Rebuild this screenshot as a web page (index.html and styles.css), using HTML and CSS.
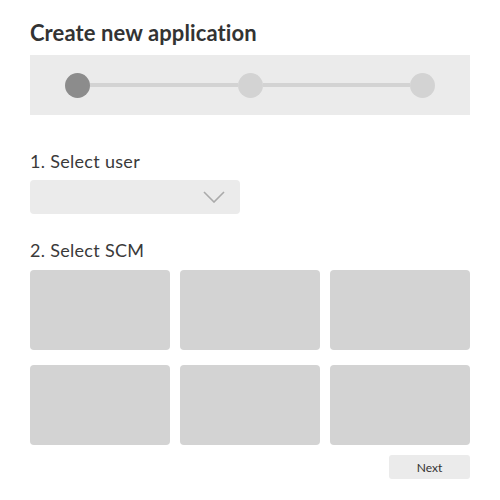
FILE: index.html
```html
<!DOCTYPE html>
<html>
<head>
<meta charset="utf-8">
<link rel="stylesheet" href="styles.css">
</head>
<body>
<div class="page">
  <h1 class="title">Create new application</h1>
  <div class="stepper">
    <div class="track">
      <span class="dot active"></span>
      <span class="line"></span>
      <span class="dot"></span>
      <span class="line"></span>
      <span class="dot"></span>
    </div>
  </div>
  <h2 class="label first">1. Select user</h2>
  <div class="select">
    <svg class="chev" width="22" height="12" viewBox="0 0 22 12"><path d="M1 1 L11 11 L21 1" fill="none" stroke="#aaaaaa" stroke-width="1.6"/></svg>
  </div>
  <h2 class="label second">2. Select SCM</h2>
  <div class="grid">
    <div class="card"></div>
    <div class="card"></div>
    <div class="card"></div>
    <div class="card"></div>
    <div class="card"></div>
    <div class="card"></div>
  </div>
  <div class="actions">
    <button class="next">Next</button>
  </div>
</div>
</body>
</html>
```
FILE: styles.css
```css
html, body {
  margin: 0;
  padding: 0;
  background: #ffffff;
}
body {
  font-family: Lato, "Liberation Sans", sans-serif;
  color: #333333;
}
.page {
  width: 440px;
  padding: 0 30px;
}
.title {
  margin: 0;
  padding-top: 21px;
  font-size: 22px;
  font-weight: 700;
  line-height: 24px;
  letter-spacing: 0.1px;
  color: #333333;
}
.stepper {
  margin-top: 10px;
  height: 60px;
  background: #ebebeb;
  display: flex;
  align-items: center;
  padding: 0 35px;
}
.track {
  flex: 1;
  display: flex;
  align-items: center;
}
.dot {
  width: 25px;
  height: 25px;
  border-radius: 50%;
  background: #d3d3d3;
  flex: none;
}
.dot.active {
  background: #8c8c8c;
}
.line {
  flex: 1;
  height: 4px;
  background: #d3d3d3;
}
.label {
  margin: 0;
  font-size: 18px;
  font-weight: 400;
  line-height: 20px;
  letter-spacing: 0.3px;
  color: #3a3a3a;
}
.label.first {
  margin-top: 36px;
}
.select {
  margin-top: 9px;
  width: 210px;
  height: 34px;
  background: #ebebeb;
  border-radius: 4px;
  display: flex;
  align-items: center;
  justify-content: flex-end;
  padding-right: 15px;
  box-sizing: border-box;
}
.label.second {
  margin-top: 26px;
}
.grid {
  margin-top: 10px;
  display: grid;
  grid-template-columns: repeat(3, 1fr);
  column-gap: 10px;
  row-gap: 15px;
}
.card {
  height: 80px;
  background: #d3d3d3;
  border-radius: 4px;
}
.actions {
  display: flex;
  justify-content: flex-end;
  margin-top: 10px;
}
.next {
  width: 81px;
  height: 24px;
  border: none;
  border-radius: 3px;
  background: #ebebeb;
  font-family: Lato, "Liberation Sans", sans-serif;
  font-size: 12px;
  color: #333333;
  padding: 0;
}
```
